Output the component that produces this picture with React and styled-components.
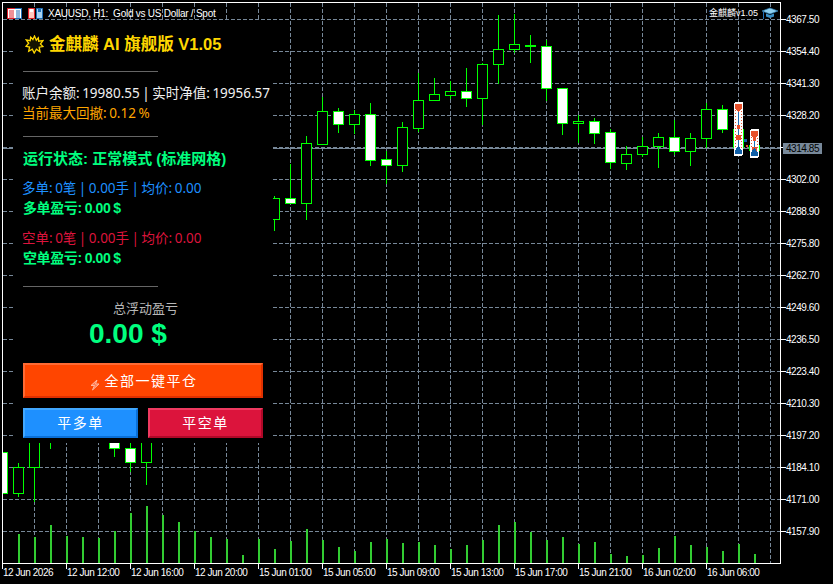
import React from "react";
import styled, { createGlobalStyle } from "styled-components";

const GlobalStyle = createGlobalStyle`
  html, body {
    margin: 0;
    padding: 0;
    background: #000;
  }
  * {
    box-sizing: border-box;
  }
`;

const PRICES = [
  "4367.50", "4354.40", "4341.30", "4328.20", "4314.85", "4302.00", "4288.90", "4275.80", "4262.70",
  "4249.60", "4236.50", "4223.40", "4210.30", "4197.20", "4184.10", "4171.00", "4157.90",
];

const TIMES = [
  "12 Jun 2026", "12 Jun 12:00", "12 Jun 16:00", "12 Jun 20:00", "15 Jun 01:00", "15 Jun 05:00",
  "15 Jun 09:00", "15 Jun 13:00", "15 Jun 17:00", "15 Jun 21:00", "16 Jun 02:00", "16 Jun 06:00",
];

// x, wick top, wick bottom, body top, body bottom, white body
const CANDLES = [
  [2, 452, 493, 452, 493, 1],
  [18, 463, 497, 467, 493, 0],
  [34, 430, 502, 430, 467, 0],
  [50, 430, 449, 430, 440, 0],
  [114, 430, 457, 430, 448, 1],
  [130, 430, 472, 448, 462, 1],
  [146, 430, 485, 430, 462, 0],
  [274, 196, 231, 198, 219, 0],
  [290, 164, 204, 198, 203, 1],
  [306, 136, 220, 143, 203, 0],
  [322, 97, 145, 111, 144, 0],
  [338, 108, 133, 111, 124, 1],
  [354, 110, 134, 114, 124, 0],
  [370, 103, 166, 114, 160, 1],
  [386, 151, 184, 159, 165, 1],
  [402, 122, 172, 127, 165, 0],
  [418, 73, 132, 100, 128, 0],
  [434, 78, 100, 94, 100, 0],
  [450, 81, 99, 91, 95, 0],
  [466, 68, 107, 91, 98, 1],
  [482, 63, 125, 64, 98, 0],
  [498, 15, 84, 49, 64, 0],
  [514, 14, 53, 44, 49, 0],
  [530, 35, 63, 45, 46, 0],
  [546, 40, 101, 46, 88, 1],
  [562, 88, 135, 88, 123, 1],
  [578, 115, 143, 121, 123, 0],
  [594, 118, 144, 121, 133, 1],
  [610, 129, 169, 132, 162, 1],
  [626, 146, 170, 154, 163, 0],
  [642, 137, 157, 146, 154, 0],
  [658, 133, 168, 137, 146, 0],
  [674, 120, 155, 137, 151, 1],
  [690, 133, 166, 138, 151, 0],
  [706, 103, 148, 109, 138, 0],
  [722, 105, 133, 109, 129, 1],
  [738, 125, 150, 129, 147, 0],
  [754, 140, 152, 145, 150, 0],
];

// x, top of the volume bar
const VOLUMES = [
  [18, 534], [34, 537], [50, 525], [66, 536], [82, 537], [98, 538], [114, 531], [130, 513], [146, 506],
  [162, 515], [178, 522], [194, 531], [210, 537], [226, 539], [242, 555], [258, 539], [274, 549],
  [290, 541], [306, 529], [322, 540], [338, 547], [354, 551], [370, 542], [386, 539], [402, 543],
  [418, 542], [434, 545], [450, 549], [466, 545], [482, 540], [498, 525], [514, 522], [530, 532],
  [546, 540], [562, 537], [578, 544], [594, 542], [610, 554], [626, 556], [642, 555], [658, 548],
  [674, 536], [690, 545], [706, 547], [722, 551], [738, 544], [754, 554],
];

const GRID_X = Array.from({ length: 24 }, (_, i) => 34 + i * 32);
const GRID_Y = Array.from({ length: 17 }, (_, i) => 19 + i * 32);

const Page = styled.div`
  width: 833px;
  height: 584px;
  padding: 2px 0 0 2px;
  background: #000;
  display: grid;
  grid-template-columns: 779px 52px;
  grid-template-rows: 562px 20px;
  overflow: hidden;
`;

const ChartFrame = styled.div`
  position: relative;
  border: 1px solid #fff;
  overflow: hidden;
`;

const ChartSvg = styled.svg`
  display: block;
  shape-rendering: crispEdges;
`;

const PriceAxis = styled.div`
  display: flex;
  flex-direction: column;
  padding-top: 2px;
`;

const PriceRow = styled.div`
  position: relative;
  flex: 0 0 32px;
  padding-left: 5px;
  color: #fff;
  font: 10px/32px "Liberation Sans", sans-serif;
  letter-spacing: -0.45px;

  &::before {
    content: "";
    position: absolute;
    left: 0;
    top: 15px;
    width: 5px;
    height: 1px;
    background: #fff;
  }
`;

const PriceTag = styled.div`
  position: relative;
  margin: 11px 0 0 -3px;
  width: 39px;
  height: 11px;
  padding-left: 3px;
  background: #778899;
  color: #000;
  font: 10px/11px "Liberation Sans", sans-serif;
  letter-spacing: -0.45px;
`;

const TimeAxis = styled.div`
  grid-column: 1 / 3;
  display: flex;
`;

const TimeLabel = styled.div`
  position: relative;
  flex: 0 0 64px;
  padding: 2px 0 0 1px;
  color: #fff;
  white-space: nowrap;
  font: 10px/14px "Liberation Sans", sans-serif;
  letter-spacing: -0.45px;

  &::before {
    content: "";
    position: absolute;
    left: 0;
    top: 0;
    width: 1px;
    height: 5px;
    background: #fff;
  }
`;

const Legend = styled.div`
  position: absolute;
  left: 4px;
  top: 4px;
  display: flex;
  align-items: center;
  gap: 6px;
  color: #fff;
  font: 10px/13px "Liberation Sans", sans-serif;
  white-space: pre;
`;

const LegendText = styled.span`
  margin-left: -2px;
  letter-spacing: -0.25px;
`;

const Badge = styled.div`
  position: absolute;
  right: 2px;
  top: 4px;
  display: flex;
  align-items: center;
  gap: 4px;
  color: #fff;
  font: 9px/13px "Liberation Sans", "Noto Sans CJK SC", sans-serif;
`;

const Panel = styled.div`
  position: absolute;
  left: 10px;
  top: 17px;
  width: 260px;
  height: 423px;
  padding: 14px 0 0 10px;
  background: #000;
  display: flex;
  flex-direction: column;
  align-items: flex-start;
  font-family: "Noto Sans", "Noto Sans CJK SC", sans-serif;
`;

const Title = styled.div`
  display: flex;
  align-items: center;
  gap: 5px;
  height: 20px;
  margin-left: 2px;
  color: #ffd700;
  font: bold 16.5px/20px "Liberation Sans", "Noto Sans CJK SC", sans-serif;
  white-space: pre;
`;

const Divider = styled.div`
  width: 135px;
  height: 1px;
  margin-top: ${(p) => p.$mt}px;
  background: #666;
`;

const Row = styled.div`
  height: 20px;
  margin-top: ${(p) => p.$mt || 0}px;
  margin-left: -1px;
  color: ${(p) => p.$color};
  font-size: 13.5px;
  line-height: 20px;
  word-spacing: -1px;
  white-space: pre;
`;

const BoldRow = styled(Row)`
  margin-left: 0;
  font: bold 14px/20px "Liberation Sans", "Noto Sans CJK SC", sans-serif;
  letter-spacing: -0.4px;
  word-spacing: -0.5px;
`;

const StatusRow = styled(BoldRow)`
  font-size: 15px;
  letter-spacing: 0;
  word-spacing: 0;
`;

const TotalLabel = styled.div`
  height: 20px;
  margin: 11px 0 0 90px;
  color: #b8b8b8;
  font-size: 13px;
  line-height: 20px;
`;

const TotalValue = styled.div`
  height: 32px;
  margin-left: 66px;
  color: #00ff7f;
  font: bold 28px/32px "Liberation Sans", sans-serif;
`;

const Bevel = styled.button`
  display: flex;
  align-items: center;
  justify-content: center;
  padding: 0 0 2px;
  border: 2px solid;
  border-color: ${(p) => p.$light} ${(p) => p.$dark} ${(p) => p.$dark} ${(p) => p.$light};
  background: ${(p) => p.$bg};
  color: #fff;
  font-family: "Noto Sans CJK SC", sans-serif;
  font-size: 14px;
  letter-spacing: 1.5px;
`;

const CloseAll = styled(Bevel)`
  width: 240px;
  height: 35px;
  margin-top: 13px;
  gap: 4px;
`;

const CloseRow = styled.div`
  display: flex;
  gap: 10px;
  margin-top: 10px;
`;

const CloseSide = styled(Bevel)`
  width: 115px;
  height: 30px;
`;

const BoltSvg = styled.svg`
  margin-top: 10px;
`;

function Candle({ c }) {
  const [x, wt, wb, bt, bb, white] = c;
  return (
    <g stroke="#00ff00">
      <line x1={x + 0.5} y1={wt} x2={x + 0.5} y2={wb} />
      <rect x={x - 4.5} y={bt + 0.5} width={10} height={bb - bt} fill={white ? "#fff" : "#000"} />
    </g>
  );
}

function Marker({ x, top, bottom }) {
  const dots = [];
  for (let y = top + 2; y < bottom - 9; y += 3) {
    dots.push(<rect key={y} x={x - 3} y={y} width={1} height={1} fill="#e8502a" />);
    dots.push(<rect key={y + "r"} x={x + 3} y={y + 1} width={1} height={1} fill="#e8502a" />);
  }
  const mid = top + Math.round((bottom - top) * 0.62);
  return (
    <g>
      <rect x={x - 4} y={top} width={9} height={bottom - top} rx={2} fill="#fff" />
      {dots}
      <rect x={x} y={top + 6} width={1} height={bottom - top - 12} fill="#1e6fb8" />
      <path d={`M${x - 3} ${top + 2}h7v4l-3 4h-1l-3-4z`} fill="#e8502a" />
      <rect x={x - 1} y={mid - 10} width={3} height={4} fill="#e8502a" />
      <rect x={x - 2} y={mid} width={5} height={5} fill="#e8502a" />
      <path d={`M${x - 3} ${bottom - 2}h7v-3l-3-5h-1l-3 5z`} fill="#1060a8" />
    </g>
  );
}

function Chart() {
  return (
    <ChartSvg width={777} height={560} viewBox="3 3 777 560">
      <g stroke="#778899" strokeDasharray="4 2">
        {GRID_Y.map((y) => (
          <line key={y} x1={3} y1={y + 0.5} x2={780} y2={y + 0.5} />
        ))}
        {GRID_X.map((x) => (
          <line key={x} x1={x + 0.5} y1={3} x2={x + 0.5} y2={563} />
        ))}
      </g>
      <line x1={3} y1={148.5} x2={780} y2={148.5} stroke="#778899" />
      {VOLUMES.map(([x, top]) => (
        <rect key={x} x={x} y={top} width={2} height={563 - top} fill="#32cd32" />
      ))}
      {CANDLES.map((c) => (
        <Candle key={c[0]} c={c} />
      ))}
      <Marker x={738} top={102} bottom={156} />
      <Marker x={754} top={129} bottom={158} />
      <rect x={744} y={139} width={3} height={3} fill="#1060a8" />
      <rect x={746} y={145} width={2} height={2} fill="#e8502a" />
    </ChartSvg>
  );
}

function TableIcon() {
  return (
    <svg width="15" height="11" viewBox="0 0 15 11">
      <rect x="0.5" y="0.5" width="14" height="10" fill="#fff" stroke="#1e6fb8" />
      <rect x="0" y="0" width="8" height="1" fill="#e0202a" />
      <rect x="0" y="10" width="8" height="1" fill="#e0202a" />
      <rect x="0" y="0" width="1" height="11" fill="#e0202a" />
      <path d="M2 3h5M2 5h5M2 7h5M2 9h5" stroke="#e0202a" />
      <path d="M9 3h4M9 5h4M9 7h4M9 9h4" stroke="#1e6fb8" />
    </svg>
  );
}

function SaveIcon() {
  return (
    <svg width="16" height="11" viewBox="0 0 16 11">
      <path d="M0.5 0.5h6v10h-6z" fill="#ffc9c0" stroke="#e0202a" />
      <rect x="2" y="1" width="3" height="3" fill="#fff" />
      <path d="M8.5 0.5h6v10h-6z" fill="#a8d4f4" stroke="#1e6fb8" />
      <rect x="10" y="1" width="3" height="3" fill="#1e6fb8" />
    </svg>
  );
}

function HatIcon() {
  return (
    <svg width="16" height="13" viewBox="0 0 16 13">
      <path d="M0 4l8-3 8 3-8 3z" fill="#8fd0f0" stroke="#2a7ab0" strokeWidth="0.7" />
      <path d="M4 6.5v3l4 1.5 4-1.5v-3l-4 1.5z" fill="#3a90c8" />
      <rect x="1" y="5" width="1" height="7" fill="#1e6fb8" />
    </svg>
  );
}

function BurstIcon() {
  return (
    <svg width="19" height="19" viewBox="0 0 19 19">
      <path
        d="M9.500 1l1.800 4.200 2-2.400.4 3.400 4.300-.6-2.600 3.400 2.600 2.600-3.800.6.8 4.600-3.600-2.600-2.200 3.800-1.900-3.800-3.600 2 .9-4.200-3.600-.7 2.700-3-2.500-3.400 4 .8.5-3.600 2.200 2.400z"
        fill="#141400"
        stroke="#ffd700"
        strokeWidth="1.3"
      />
    </svg>
  );
}

function BoltIcon() {
  return (
    <BoltSvg width="12" height="12" viewBox="0 0 12 12">
      <path d="M8 1L2 6.500h3.500L3.500 11 10 5H6.500z" fill="#ff7a50" stroke="#ffb8a0" strokeWidth="1" />
    </BoltSvg>
  );
}

export default function App() {
  return (
    <Page>
      <GlobalStyle />
      <ChartFrame>
        <Chart />
        <Legend>
          <TableIcon />
          <SaveIcon />
          <LegendText>XAUUSD, H1:  Gold vs US Dollar / Spot</LegendText>
        </Legend>
        <Badge>
          <span>金麒麟v1.05</span>
          <HatIcon />
        </Badge>
        <Panel>
          <Title>
            <BurstIcon />
            <span>金麒麟 AI 旗舰版 V1.05</span>
          </Title>
          <Divider $mt={17} />
          <Row $mt={11} $color="#f0f0f0">账户余额: 19980.55 | 实时净值: 19956.57</Row>
          <Row $color="#ffa500">当前最大回撤: 0.12 %</Row>
          <Divider $mt={13} />
          <StatusRow $mt={12} $color="#00ff7f">运行状态: 正常模式 (标准网格)</StatusRow>
          <Row $mt={9} $color="#1e90ff">多单: 0笔 | 0.00手 | 均价: 0.00</Row>
          <BoldRow $color="#00ff7f">多单盈亏: 0.00 $</BoldRow>
          <Row $mt={10} $color="#dc143c">空单: 0笔 | 0.00手 | 均价: 0.00</Row>
          <BoldRow $color="#00ff7f">空单盈亏: 0.00 $</BoldRow>
          <Divider $mt={18} />
          <TotalLabel>总浮动盈亏</TotalLabel>
          <TotalValue>0.00 $</TotalValue>
          <CloseAll $bg="#ff4500" $light="#ff6a33" $dark="#e03000">
            <BoltIcon />
            <span>全部一键平仓</span>
          </CloseAll>
          <CloseRow>
            <CloseSide $bg="#1e90ff" $light="#42a8ff" $dark="#0a70d8">平多单</CloseSide>
            <CloseSide $bg="#dc143c" $light="#f03a60" $dark="#b00828">平空单</CloseSide>
          </CloseRow>
        </Panel>
      </ChartFrame>
      <PriceAxis>
        {PRICES.map((p, i) => (
          <PriceRow key={p}>{i === 4 ? <PriceTag>{p}</PriceTag> : p}</PriceRow>
        ))}
      </PriceAxis>
      <TimeAxis>
        {TIMES.map((t) => (
          <TimeLabel key={t}>{t}</TimeLabel>
        ))}
      </TimeAxis>
    </Page>
  );
}
